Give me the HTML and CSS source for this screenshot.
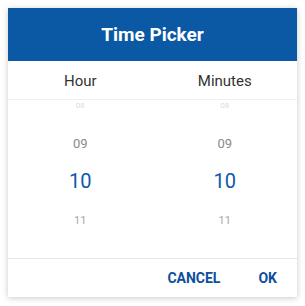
FILE: index.html
```html
<!DOCTYPE html>
<html>
<head>
<meta charset="utf-8">
<link rel="stylesheet" href="styles.css">
</head>
<body>
<div class="card">
  <div class="header">Time Picker</div>
  <div class="labels">
    <div class="label">Hour</div>
    <div class="label">Minutes</div>
  </div>
  <div class="wheels">
    <div class="wheel">
      <div class="item far">08</div>
      <div class="item near">09</div>
      <div class="item sel">10</div>
      <div class="item next">11</div>
    </div>
    <div class="wheel">
      <div class="item far">08</div>
      <div class="item near">09</div>
      <div class="item sel">10</div>
      <div class="item next">11</div>
    </div>
  </div>
  <div class="footer">
    <button class="btn">CANCEL</button>
    <button class="btn">OK</button>
  </div>
</div>
</body>
</html>
```
FILE: styles.css
```css
html, body {
  margin: 0;
  padding: 0;
  background: #ffffff;
}
body {
  padding: 8px;
  font-family: Roboto, "Liberation Sans", sans-serif;
}
.card {
  width: 289px;
  height: 289px;
  background: #fff;
  box-shadow: 0 1px 6px rgba(0,0,0,0.22);
  display: flex;
  flex-direction: column;
  overflow: hidden;
}
.header {
  height: 53px;
  background: #0b59a4;
  color: #fff;
  font-size: 19px;
  font-weight: 700;
  display: flex;
  align-items: center;
  justify-content: center;
}
.labels {
  height: 38px;
  display: grid;
  grid-template-columns: 1fr 1fr;
  border-bottom: 1px solid #f1f1f1;
}
.label {
  display: flex;
  align-items: center;
  justify-content: center;
  font-size: 15px;
  color: #333;
  padding-top: 2px;
}
.wheels {
  flex: 1;
  display: grid;
  grid-template-columns: 1fr 1fr;
  overflow: hidden;
}
.wheel {
  display: flex;
  flex-direction: column;
  margin-top: -13px;
}
.item {
  height: 37.5px;
  display: flex;
  align-items: center;
  justify-content: center;
}
.far { font-size: 8px; color: #dcdcdc; }
.near { font-size: 13px; color: #8a8a8a; }
.sel { font-size: 20px; color: #0d58a8; }
.next { font-size: 11px; color: #a8a8a8; margin-top: 2px; }
.footer {
  height: 38px;
  border-top: 1px solid #e6e6e6;
  display: flex;
  justify-content: flex-end;
  align-items: center;
  gap: 38px;
  padding-right: 20px;
}
.btn {
  background: none;
  border: 0;
  padding: 0;
  font-family: Roboto, "Liberation Sans", sans-serif;
  font-size: 14px;
  font-weight: 700;
  color: #0d4f9c;
  cursor: pointer;
}
```
